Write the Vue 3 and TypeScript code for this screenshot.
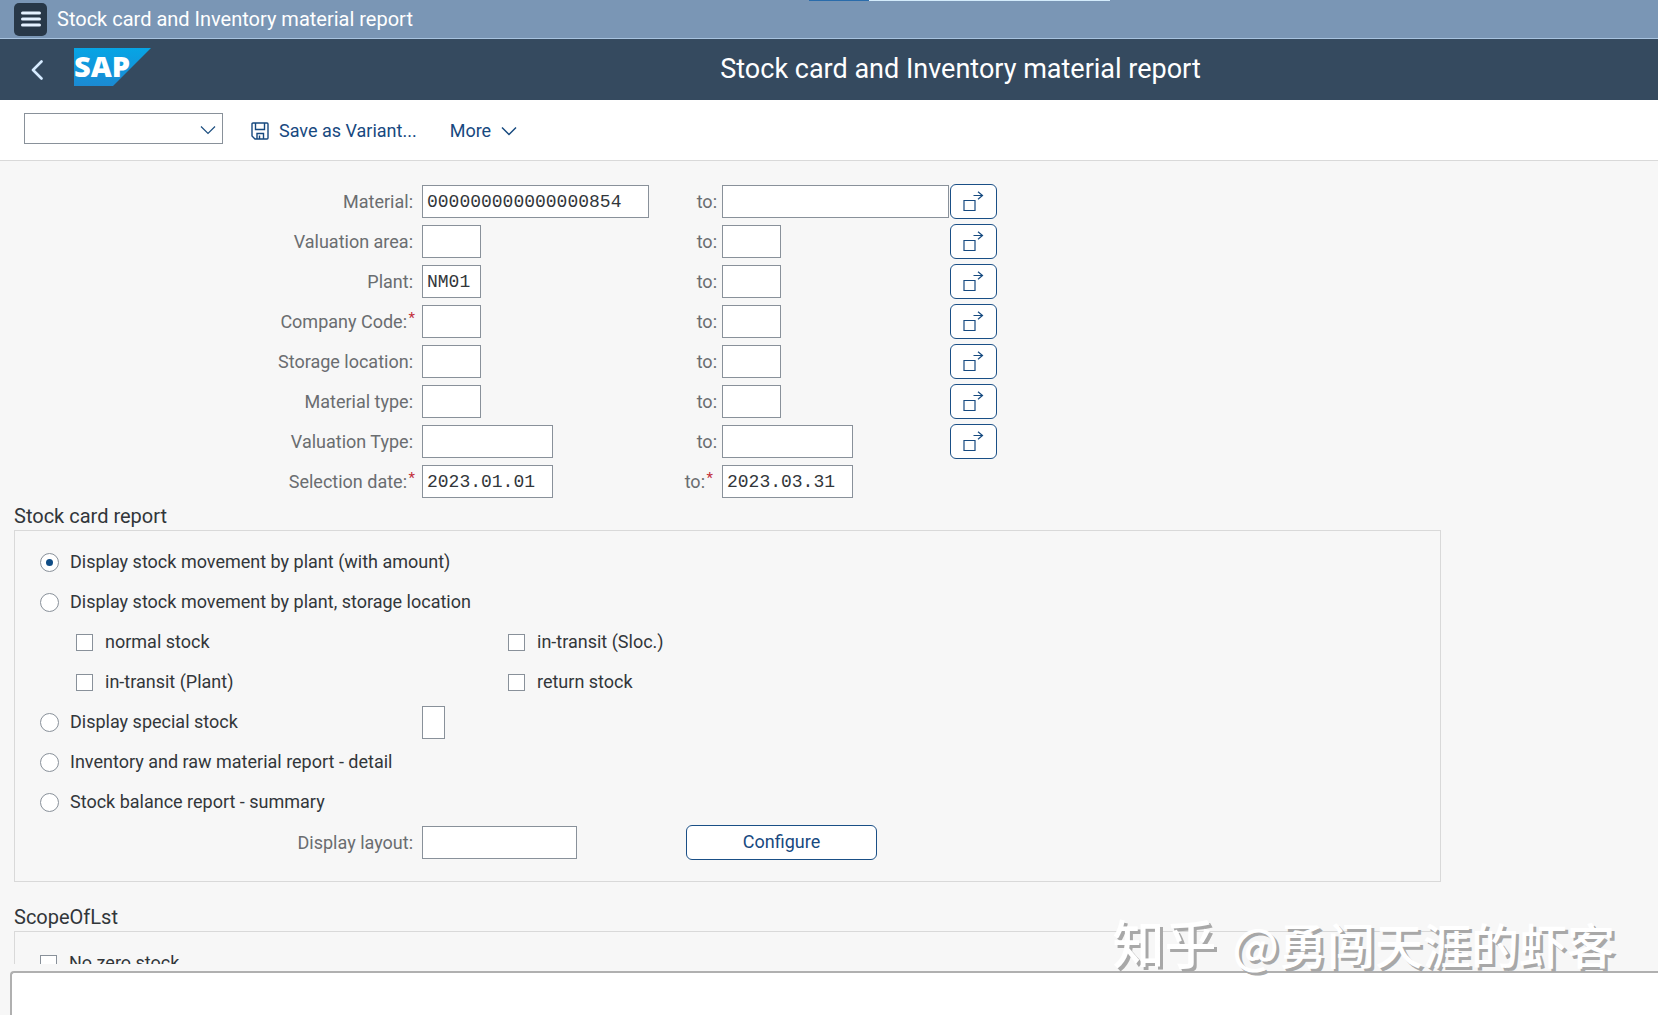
<script setup lang="ts">
import { ref } from 'vue'

type FieldSize = 'short' | 'medium' | 'long'

interface Criterion {
  id: string
  label: string
  size: FieldSize
  from: string
  to: string
  required?: boolean
  toRequired?: boolean
  multi: boolean
}

const criteria = ref<Criterion[]>([
  { id: 'material', label: 'Material:', size: 'long', from: '000000000000000854', to: '', multi: true },
  { id: 'valuation-area', label: 'Valuation area:', size: 'short', from: '', to: '', multi: true },
  { id: 'plant', label: 'Plant:', size: 'short', from: 'NM01', to: '', multi: true },
  { id: 'company-code', label: 'Company Code:', size: 'short', from: '', to: '', required: true, multi: true },
  { id: 'storage-location', label: 'Storage location:', size: 'short', from: '', to: '', multi: true },
  { id: 'material-type', label: 'Material type:', size: 'short', from: '', to: '', multi: true },
  { id: 'valuation-type', label: 'Valuation Type:', size: 'medium', from: '', to: '', multi: true },
  { id: 'selection-date', label: 'Selection date:', size: 'medium', from: '2023.01.01', to: '2023.03.31', required: true, toRequired: true, multi: false },
])

const report = ref('plant')
const stockKinds = ref<string[]>([])
const specialStock = ref('')
const displayLayout = ref('')
const noZeroStock = ref(false)
const variant = ref('')
</script>

<template>
  <div class="app">
    <div class="topbar">
      <div class="progress" aria-hidden="true"><span></span></div>
      <button class="menu" type="button" aria-label="Menu">
        <svg width="20" height="16" viewBox="0 0 20 16"><path d="M1.500 2h17M1.500 8h17M1.500 14h17" stroke="#e4f1ff" stroke-width="3" stroke-linecap="round" /></svg>
      </button>
      <span class="topbar-title">Stock card and Inventory material report</span>
    </div>

    <header class="header">
      <div class="brand">
        <button class="back" type="button" aria-label="Back">
          <svg width="12" height="20" viewBox="0 0 12 20"><path d="M10.500 1.500 2 10l8.500 8.500" fill="none" stroke="#d6ebff" stroke-width="2.600" stroke-linecap="round" stroke-linejoin="round" /></svg>
        </button>
        <svg class="logo" width="77" height="38" viewBox="0 0 77 38" role="img" aria-label="SAP">
          <defs>
            <linearGradient id="logo-fill" x1="0" y1="0" x2="0" y2="1">
              <stop offset="0" stop-color="#06a5e5" />
              <stop offset="1" stop-color="#1b8ad3" />
            </linearGradient>
          </defs>
          <path d="M0 0h77L39 38H0z" fill="url(#logo-fill)" />
          <text class="logo-text" x="0" y="29">SAP</text>
        </svg>
      </div>
      <h1>Stock card and Inventory material report</h1>
    </header>

    <nav class="toolbar">
      <div class="combo">
        <select v-model="variant" aria-label="Command">
          <option value=""></option>
        </select>
        <svg class="combo-arrow" width="16" height="10" viewBox="0 0 16 10"><path d="M1 1.500 8 8.500l7-7" fill="none" stroke="#1d4f80" stroke-width="1.200" /></svg>
      </div>
      <button class="tool save" type="button">
        <svg width="18" height="18" viewBox="0 0 18 18" fill="none" stroke="#17497f" stroke-width="1.400">
          <path d="M1 2q0-1 1-1h14q1 0 1 1v14q0 1-1 1H4l-3-3z" />
          <path d="M4.500 1v6.500h9V1M6 17v-5.500h6.500V17M8.500 13.500V17" />
        </svg>
        Save as Variant...
      </button>
      <button class="tool" type="button">
        More
        <svg width="16" height="10" viewBox="0 0 16 10"><path d="M1 1.500 8 8.500l7-7" fill="none" stroke="#17497f" stroke-width="1.500" /></svg>
      </button>
    </nav>

    <main class="content">
      <form class="criteria" @submit.prevent>
        <div v-for="c in criteria" :key="c.id" class="row">
          <label class="label" :for="c.id + '-from'">{{ c.label }}<sup v-if="c.required">*</sup></label>
          <input :id="c.id + '-from'" v-model="c.from" class="field" :class="c.size" type="text" />
          <label class="label to" :for="c.id + '-to'">to:<sup v-if="c.toRequired">*</sup></label>
          <input :id="c.id + '-to'" v-model="c.to" class="field" :class="c.size" type="text" />
          <button v-if="c.multi" class="outlined multi" type="button" aria-label="Multiple selection">
            <svg width="22" height="20" viewBox="0 0 22 20" fill="none" stroke="#164a80" stroke-width="1.200">
              <path d="M1 9.500h11v10H1zM10.500 4.500h9M15 .800l4.500 3.700-4.500 3.700" />
            </svg>
          </button>
        </div>
      </form>

      <section>
        <h2>Stock card report</h2>
        <div class="panel">
          <div class="option">
            <label><input v-model="report" type="radio" name="report" value="plant" />Display stock movement by plant (with amount)</label>
          </div>
          <div class="option">
            <label><input v-model="report" type="radio" name="report" value="location" />Display stock movement by plant, storage location</label>
          </div>
          <div class="option nested">
            <label><input v-model="stockKinds" type="checkbox" value="normal" />normal stock</label>
            <label><input v-model="stockKinds" type="checkbox" value="sloc" />in-transit (Sloc.)</label>
          </div>
          <div class="option nested">
            <label><input v-model="stockKinds" type="checkbox" value="transit" />in-transit (Plant)</label>
            <label><input v-model="stockKinds" type="checkbox" value="return" />return stock</label>
          </div>
          <div class="option split">
            <label><input v-model="report" type="radio" name="report" value="special" />Display special stock</label>
            <input v-model="specialStock" class="field tiny" type="text" aria-label="Special stock" />
          </div>
          <div class="option">
            <label><input v-model="report" type="radio" name="report" value="detail" />Inventory and raw material report - detail</label>
          </div>
          <div class="option">
            <label><input v-model="report" type="radio" name="report" value="summary" />Stock balance report - summary</label>
          </div>
          <div class="option layout-row">
            <label class="label" for="display-layout">Display layout:</label>
            <input id="display-layout" v-model="displayLayout" class="field layout" type="text" />
            <button class="outlined configure" type="button">Configure</button>
          </div>
        </div>
      </section>

      <section class="scope">
        <h2>ScopeOfLst</h2>
        <div class="panel">
          <div class="option">
            <label><input v-model="noZeroStock" type="checkbox" />No zero stock</label>
          </div>
        </div>
      </section>
    </main>

    <footer class="statusbar"></footer>
    <div class="watermark"><span>知乎</span> @勇闯天涯的虾客</div>
  </div>
</template>

<style>
body {
  margin: 0;
  background: #f7f7f7;
}
</style>

<style scoped>
.app {
  position: relative;
  display: flex;
  flex-direction: column;
  height: 100vh;
  overflow: hidden;
  background: #f7f7f7;
  color: #32363a;
  font-family: Roboto, "Liberation Sans", sans-serif;
  font-size: 18px;
  line-height: 24px;
}
button,
input,
select {
  box-sizing: border-box;
  margin: 0;
  padding: 0;
  font: inherit;
}
svg {
  display: block;
  flex: none;
}
.topbar {
  position: relative;
  display: flex;
  flex: none;
  align-items: center;
  gap: 10px;
  height: 38px;
  padding-left: 14px;
  border-bottom: 1px solid #a9c4e0;
  background: #7a96b5;
  color: #fff;
}
.progress {
  position: absolute;
  top: 0;
  right: 548px;
  width: 301px;
  height: 1px;
  background: #d3ebfb;
}
.progress span {
  display: block;
  width: 60px;
  height: 1px;
  background: #2a6cab;
}
.menu {
  display: grid;
  place-items: center;
  width: 33px;
  height: 33px;
  border: 0;
  border-radius: 5px;
  background: #283848;
}
.topbar-title {
  font-size: 20px;
}
.header {
  display: flex;
  flex: none;
  align-items: center;
  height: 61px;
  background: #354a5f;
  color: #fff;
}
.brand {
  display: flex;
  flex: none;
  align-items: center;
  width: 263px;
  padding-bottom: 6px;
}
.back {
  display: flex;
  justify-content: center;
  align-items: center;
  width: 74px;
  height: 38px;
  padding-top: 6px;
  border: 0;
  background: none;
}
.logo-text {
  fill: #fff;
  font-family: "Open Sans", sans-serif;
  font-size: 29px;
  font-weight: 800;
}
h1 {
  flex: 1;
  margin: 0;
  padding-bottom: 2px;
  font-size: 27px;
  font-weight: 400;
  line-height: 32px;
  text-align: center;
}
.toolbar {
  display: flex;
  flex: none;
  align-items: center;
  height: 60px;
  padding-left: 24px;
  border-bottom: 1px solid #d9d9d9;
  background: #fff;
}
.combo {
  position: relative;
  display: flex;
  align-items: flex-start;
  width: 199px;
  height: 34px;
}
.combo select {
  width: 100%;
  height: 31px;
  border: 1px solid #89919a;
  border-radius: 0;
  background: #fff;
  appearance: none;
}
.combo-arrow {
  position: absolute;
  top: 12px;
  right: 7px;
  pointer-events: none;
}
.tool {
  display: flex;
  align-items: center;
  gap: 10px;
  padding-top: 2px;
  border: 0;
  background: none;
  color: #17497f;
}
.save {
  margin: 0 33px 0 28px;
}
.content {
  flex: 1;
  min-height: 0;
  overflow: hidden;
  padding: 20px 14px 0;
}
.row {
  display: grid;
  grid-template-columns: 408px 228px 72px 228px 47px;
  align-items: center;
  height: 40px;
}
.label {
  padding: 2px 9px 0 0;
  color: #6a6d70;
  text-align: right;
}
.label.to {
  padding-right: 5px;
}
.label sup {
  display: inline-block;
  width: 8px;
  margin-right: -2px;
  color: #c22f3a;
  line-height: 16px;
  text-align: right;
  vertical-align: 5px;
}
.label.to sup {
  margin-right: 4px;
}
.field {
  height: 33px;
  padding: 2px 4px 0;
  border: 1px solid #89919a;
  border-radius: 0;
  background: #fff;
  color: #32363a;
  font-family: "Liberation Mono", monospace;
  outline: 0;
}
.short {
  width: 59px;
}
.medium {
  width: 131px;
}
.long {
  width: 227px;
}
.tiny {
  width: 23px;
}
.layout {
  width: 155px;
}
.outlined {
  display: grid;
  place-items: center;
  height: 35px;
  border: 1px solid #1a4f86;
  border-radius: 6px;
  background: #fff;
  color: #17497f;
}
.multi {
  width: 47px;
}
h2 {
  margin: 0;
  padding-top: 2px;
  font-size: 20px;
  font-weight: 400;
  line-height: 27px;
}
.panel {
  box-sizing: border-box;
  max-width: 1427px;
  padding: 11px 25px 19px;
  border: 1px solid #d9d9d9;
}
.option {
  display: flex;
  align-items: center;
  height: 40px;
}
.option label:not(.label) {
  display: flex;
  align-items: center;
  gap: 11px;
}
.option input[type="checkbox"] {
  margin-right: 1px;
}
.nested {
  padding-left: 36px;
}
.nested label:first-child {
  width: 432px;
}
.split label {
  width: 382px;
}
.layout-row .label {
  box-sizing: border-box;
  width: 382px;
}
.configure {
  width: 191px;
  margin-left: 109px;
}
input[type="radio"],
input[type="checkbox"] {
  display: grid;
  flex: none;
  place-items: center;
  width: 17px;
  height: 17px;
  border: 1px solid #89919a;
  background: #fff;
  appearance: none;
}
input[type="radio"] {
  width: 19px;
  height: 19px;
  border-radius: 50%;
}
input[type="radio"]:checked::before {
  width: 7px;
  height: 7px;
  border-radius: 50%;
  background: #0f4c85;
  content: "";
}
input[type="checkbox"]:checked::before {
  width: 9px;
  height: 9px;
  background: #0f4c85;
  content: "";
}
.scope {
  margin-top: 20px;
}
.statusbar {
  flex: none;
  box-sizing: border-box;
  height: 44px;
  margin: 7px 0 0 10px;
  border: 2px solid #b0b0b0;
  border-width: 2px 0 0 2px;
  border-top-left-radius: 4px;
  background: #fff;
}
.watermark {
  position: absolute;
  right: 43px;
  bottom: 40px;
  color: #fff;
  font-family: "Noto Sans CJK SC", sans-serif;
  font-size: 48px;
  font-weight: 500;
  line-height: 64px;
  text-shadow: 3px 3px 0 #a8a8a8;
  white-space: nowrap;
  pointer-events: none;
}
.watermark span {
  margin-right: 5px;
  font-size: 52px;
}
</style>
